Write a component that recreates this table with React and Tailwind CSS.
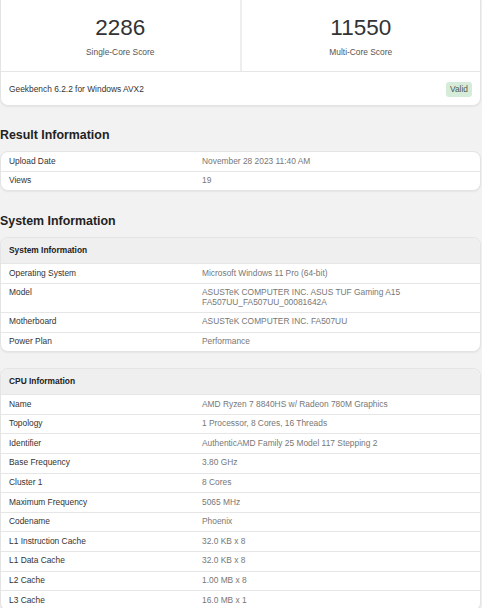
import React from 'react'

const resultRows = [
  ['Upload Date', 'November 28 2023 11:40 AM'],
  ['Views', '19'],
]

const systemRows = [
  ['Operating System', 'Microsoft Windows 11 Pro (64-bit)'],
  ['Model', 'ASUSTeK COMPUTER INC. ASUS TUF Gaming A15\nFA507UU_FA507UU_00081642A'],
  ['Motherboard', 'ASUSTeK COMPUTER INC. FA507UU'],
  ['Power Plan', 'Performance'],
]

const cpuRows = [
  ['Name', 'AMD Ryzen 7 8840HS w/ Radeon 780M Graphics'],
  ['Topology', '1 Processor, 8 Cores, 16 Threads'],
  ['Identifier', 'AuthenticAMD Family 25 Model 117 Stepping 2'],
  ['Base Frequency', '3.80 GHz'],
  ['Cluster 1', '8 Cores'],
  ['Maximum Frequency', '5065 MHz'],
  ['Codename', 'Phoenix'],
  ['L1 Instruction Cache', '32.0 KB x 8'],
  ['L1 Data Cache', '32.0 KB x 8'],
  ['L2 Cache', '1.00 MB x 8'],
  ['L3 Cache', '16.0 MB x 1'],
]

function Rows({ rows }) {
  return rows.map(([l, v], i) => (
    <div key={l} className={i === 0 ? '' : 'border-t border-[#e6e6e6]'}>
      <div className="flex py-[4.5px] leading-[9.6px]">
        <div className="w-[201px] pl-[8px] shrink-0 text-[#333]">{l}</div>
        <div className="text-[#777] whitespace-pre-line">{v}</div>
      </div>
    </div>
  ))
}

function Card({ title, rows, className = '' }) {
  return (
    <div className={`bg-white rounded-[8px] border border-[#e4e4e4] shadow-[0_1px_2px_rgba(0,0,0,0.06)] overflow-hidden ${className}`}>
      {title && (
        <div className="bg-[#efefef] h-[26px] flex items-center pl-[8px] font-bold text-[#222] border-b border-[#e6e6e6]">
          {title}
        </div>
      )}
      <Rows rows={rows} />
    </div>
  )
}

export default function App() {
  return (
    <div className="min-h-screen bg-[#f2f2f2] text-[8.4px] font-['Liberation_Sans',Arial,sans-serif] pr-[1px] overflow-hidden">
      <div className="bg-white rounded-b-[8px] border border-t-0 border-[#e4e4e4] shadow-[0_1px_2px_rgba(0,0,0,0.06)]">
        <div className="flex h-[72px] border-b border-[#e6e6e6]">
          <div className="flex-1 flex flex-col items-center pt-[16px] border-r-2 border-[#eeeeee]">
            <div className="text-[22.5px] leading-[24px] text-[#333]">2286</div>
            <div className="mt-[6px] text-[#555]">Single-Core Score</div>
          </div>
          <div className="flex-1 flex flex-col items-center pt-[16px]">
            <div className="text-[22.5px] leading-[24px] text-[#333]">11550</div>
            <div className="mt-[6px] text-[#555]">Multi-Core Score</div>
          </div>
        </div>
        <div className="flex items-center justify-between h-[33px] pl-[8px] pr-[8px] pt-[1px]">
          <span className="text-[#333]">Geekbench 6.2.2 for Windows AVX2</span>
          <span className="bg-[#d5ecdb] text-[#4d5a50] rounded-[3px] px-[4px] py-[3px] leading-[9px]">Valid</span>
        </div>
      </div>

      <h2 className="mt-[22px] mb-[8px] text-[12.4px] leading-[15px] font-bold text-[#222]">Result Information</h2>
      <Card rows={resultRows} />

      <h2 className="mt-[23px] mb-[8px] text-[12.4px] leading-[15px] font-bold text-[#222]">System Information</h2>
      <Card title="System Information" rows={systemRows} />

      <Card title="CPU Information" rows={cpuRows} className="mt-[16px]" />
    </div>
  )
}
